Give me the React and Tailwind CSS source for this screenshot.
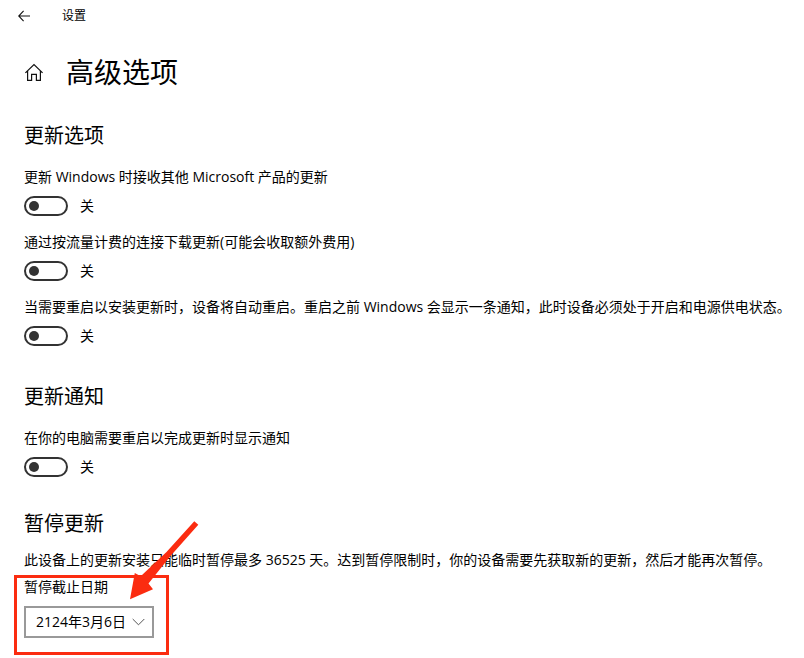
import React, { useState } from "react";

const updateOptions = [
  { id: "other-products", label: "更新 Windows 时接收其他 Microsoft 产品的更新" },
  { id: "metered", label: "通过按流量计费的连接下载更新(可能会收取额外费用)" },
  {
    id: "auto-restart",
    label:
      "当需要重启以安装更新时，设备将自动重启。重启之前 Windows 会显示一条通知，此时设备必须处于开启和电源供电状态。",
  },
];

const notifyOptions = [
  { id: "restart-notice", label: "在你的电脑需要重启以完成更新时显示通知" },
];

const Toggle = ({ id, label }) => {
  const [on, setOn] = useState(false);

  return (
    <div className="flex flex-col gap-[9px]">
      <label htmlFor={id} className="text-sm leading-5">{label}</label>
      <div className="flex items-center gap-3">
        <button
          id={id}
          type="button"
          role="switch"
          aria-checked={on}
          onClick={() => setOn(!on)}
          className={
            on
              ? "flex h-5 w-11 items-center justify-end rounded-full border-2 border-[#0078d7] bg-[#0078d7] px-[3px]"
              : "flex h-5 w-11 items-center rounded-full border-2 border-[#333] px-[3px]"
          }
        >
          <span className={on ? "size-[10px] rounded-full bg-white" : "size-[10px] rounded-full bg-[#333]"} />
        </button>
        <span className="text-sm leading-5">{on ? "开" : "关"}</span>
      </div>
    </div>
  );
};

const Section = ({ title, options }) => (
  <section className="flex flex-col gap-[17px]">
    <h2 className="text-xl leading-7">{title}</h2>
    <div className="flex flex-col gap-4">
      {options.map((item) => (
        <Toggle key={item.id} id={item.id} label={item.label} />
      ))}
    </div>
  </section>
);

const App = () => {
  return (
    <div className="min-h-screen bg-white font-['Open_Sans','Noto_Sans_CJK_SC',sans-serif] text-black">
      <header className="flex h-8 items-center gap-8 pl-[18px]">
        <button type="button" aria-label="返回">
          <svg width="12" height="12" viewBox="0 0 12 12" fill="none" stroke="#111" strokeWidth="1.1">
            <path d="M5.6 0.8 0.7 6l4.9 5.2M0.7 6H12" />
          </svg>
        </button>
        <span className="text-xs">设置</span>
      </header>

      <main className="pr-2 pb-5 pl-6">
        <div className="flex items-center gap-[23px] pt-5">
          <a href="#home" aria-label="主页">
            <svg width="19" height="18" viewBox="0 0 19 18" fill="none" stroke="#111" strokeWidth="1.2">
              <path d="M1.4 9.9 10 1.6 18.6 9.9M3.6 8v9.4h4v-6h4.8v6h4V8" />
            </svg>
          </a>
          <h1 className="text-[28px] leading-10">高级选项</h1>
        </div>

        <div className="flex flex-col gap-[37px] pt-[30px]">
          <Section title="更新选项" options={updateOptions} />
          <Section title="更新通知" options={notifyOptions} />
        </div>

        <section className="pt-[33px]">
          <h2 className="text-xl leading-7">暂停更新</h2>
          <p className="pt-3 text-sm leading-5">
            此设备上的更新安装只能临时暂停最多 36525 天。达到暂停限制时，你的设备需要先获取新的更新，然后才能再次暂停。
          </p>
          <div className="relative mt-[7px] flex w-[130px] flex-col gap-[9px]">
            <label htmlFor="pause-until" className="text-sm leading-5">暂停截止日期</label>
            <div className="relative">
              <select
                id="pause-until"
                className="h-8 w-full appearance-none border-2 border-[#999] bg-white pl-[10px] text-sm"
              >
                <option>2124年3月6日</option>
              </select>
              <svg
                className="pointer-events-none absolute top-3 right-[9px]"
                width="13" height="8" viewBox="0 0 13 8" fill="none" stroke="#555"
              >
                <path d="M0.7 1 6.5 6.8 12.3 1" />
              </svg>
            </div>
            <div className="pointer-events-none absolute -top-[2px] -right-[15px] -bottom-[17px] -left-[10px] border-3 border-[#fb2c10]" />
            <svg
              className="pointer-events-none absolute -top-[56px] left-[104px]"
              width="72" height="82" viewBox="0 0 72 82" fill="#fb2c10"
            >
              <path d="M66.3 0.3 70.3 3.8 42.5 35 20.5 62.5 25 68.3 2 78.3 6.8 52 12.7 55.3 38.5 31Z" />
            </svg>
          </div>
        </section>
      </main>
    </div>
  );
};

export default App;
